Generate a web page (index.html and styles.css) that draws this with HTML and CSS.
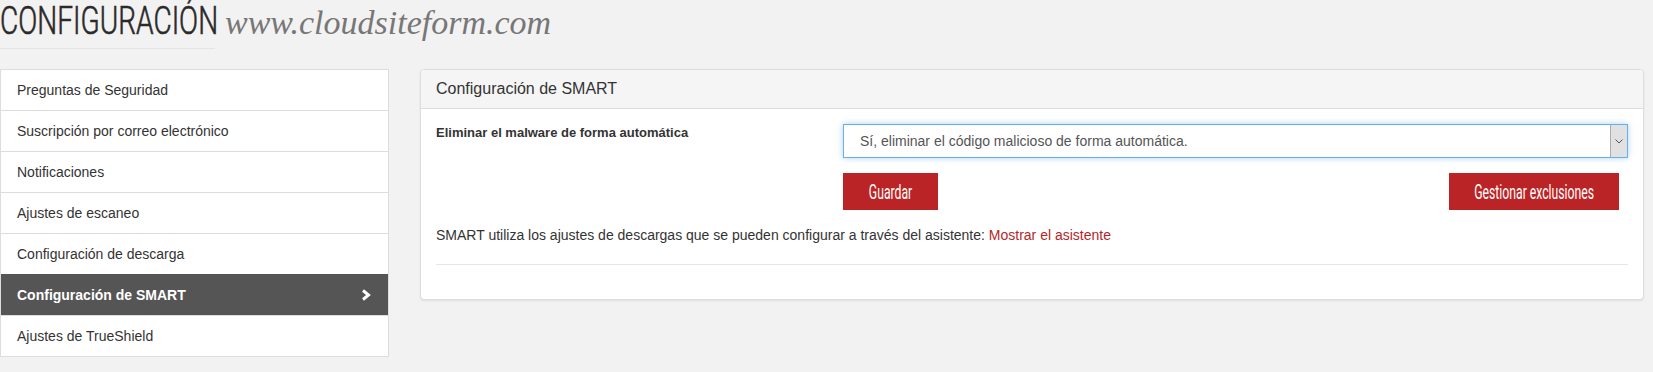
FILE: index.html
```html
<!DOCTYPE html>
<html lang="es">
<head>
<meta charset="utf-8">
<title>Configuración</title>
<link rel="stylesheet" href="styles.css">
</head>
<body>
<div class="page">
  <header class="top">
    <div class="brand">
      <h1 class="title"><span class="title-text">CONFIGURACIÓN</span></h1>
    </div>
    <span class="site">www.cloudsiteform.com</span>
  </header>

  <div class="layout">
    <nav class="side">
      <a class="side-item">Preguntas de Seguridad</a>
      <a class="side-item">Suscripción por correo electrónico</a>
      <a class="side-item">Notificaciones</a>
      <a class="side-item">Ajustes de escaneo</a>
      <a class="side-item">Configuración de descarga</a>
      <a class="side-item active">Configuración de SMART
        <svg class="chev" width="10" height="12" viewBox="0 0 10 12"><polyline points="2,1.5 7.5,6 2,10.5" fill="none" stroke="#fff" stroke-width="3"/></svg>
      </a>
      <a class="side-item">Ajustes de TrueShield</a>
    </nav>

    <section class="panel">
      <div class="panel-head">Configuración de SMART</div>
      <div class="panel-body">
        <div class="form-row">
          <label class="ctl-label">Eliminar el malware de forma automática</label>
          <div class="ctl">
            <div class="select-box">
              <select class="select"><option>Sí, eliminar el código malicioso de forma automática.</option></select>
              <span class="select-arrow"><svg width="8" height="5" viewBox="0 0 8 5"><polyline points="0.5,0.5 4,4 7.5,0.5" fill="none" stroke="#555" stroke-width="1"/></svg></span>
            </div>
            <div class="btn-row">
              <button class="btn btn-save"><span class="btn-text">Guardar</span></button>
              <button class="btn btn-wide"><span class="btn-text">Gestionar exclusiones</span></button>
            </div>
          </div>
        </div>
        <p class="note">SMART utiliza los ajustes de descargas que se pueden configurar a través del asistente: <a class="link">Mostrar el asistente</a></p>
        <hr class="sep">
      </div>
    </section>
  </div>
</div>
</body>
</html>
```

FILE: styles.css
```css
* { box-sizing: border-box; }
html, body { margin: 0; padding: 0; }
body {
  background: #f2f2f2;
  font-family: "Liberation Sans", Arial, sans-serif;
  color: #333;
}
.page { padding: 0 9px 0 0; }

.top {
  display: flex;
  align-items: baseline;
  gap: 10px;
}
.brand {
  width: 215px;
  padding-bottom: 6px;
  border-bottom: 1px solid #e4e4e4;
  white-space: nowrap;
}
.title {
  margin: 0;
  font-family: Roboto, "Liberation Sans", sans-serif;
  font-weight: 300;
  font-size: 39px;
  line-height: 42px;
  color: #2a2a2a;
}
.title-text {
  display: inline-block;
  transform: scaleX(0.72);
  transform-origin: left center;
  -webkit-text-stroke: 0.6px #2a2a2a;
}
.site {
  font-family: "Liberation Serif", "Times New Roman", serif;
  font-style: italic;
  font-size: 34px;
  color: #777;
}

.layout {
  display: flex;
  align-items: flex-start;
  gap: 31px;
  margin-top: 20px;
}

.side {
  width: 389px;
  flex: none;
  background: #fff;
  border: 1px solid #ddd;
  display: flex;
  flex-direction: column;
}
.side-item {
  display: flex;
  align-items: center;
  justify-content: space-between;
  height: 41px;
  padding: 0 16px;
  font-size: 14px;
  color: #333;
  border-top: 1px solid #ddd;
}
.side-item:first-child { border-top: none; height: 40px; }
.side-item.active {
  background: #555;
  color: #fff;
  font-weight: bold;
  border-top-color: #555;
  padding-right: 17px;
}
.chev { display: block; }

.panel {
  flex: 1;
  background: #fff;
  border: 1px solid #ddd;
  border-radius: 4px;
  box-shadow: 0 1px 2px rgba(0,0,0,0.08);
}
.panel-head {
  background: #f5f5f5;
  border-bottom: 1px solid #ddd;
  border-radius: 3px 3px 0 0;
  padding: 10px 15px;
  font-size: 16px;
  line-height: 18px;
  color: #333;
}
.panel-body { padding: 15px 15px 14px; }

.form-row {
  display: grid;
  grid-template-columns: 407px 1fr;
}
.ctl-label {
  font-weight: bold;
  font-size: 13px;
  line-height: 18px;
  color: #333;
}
.select-box {
  display: flex;
  height: 34px;
  border: 1px solid #66afe9;
  box-shadow: 0 0 6px rgba(102,175,233,0.55);
  background: #fff;
}
.select {
  flex: 1;
  -webkit-appearance: none;
  appearance: none;
  border: none;
  outline: none;
  background: #fff;
  padding: 0 16px;
  font-family: "Liberation Sans", Arial, sans-serif;
  font-size: 14px;
  color: #555;
}
.select-arrow {
  width: 17px;
  flex: none;
  display: flex;
  align-items: center;
  justify-content: center;
  background: #e1e1e1;
  border-left: 1px solid #acacac;
}

.btn-row {
  display: flex;
  justify-content: space-between;
  margin-top: 15px;
  padding-right: 9px;
}
.btn {
  height: 37px;
  border: none;
  background: #bb2426;
  color: #fff;
  font-family: Roboto, "Liberation Sans", sans-serif;
  font-size: 20px;
  padding: 0;
  display: flex;
  align-items: center;
  justify-content: center;
  white-space: nowrap;
}
.btn-save { width: 95px; }
.btn-wide { width: 170px; }
.btn-text {
  display: inline-block;
  transform: scaleX(0.61);
  transform-origin: center;
}

.note {
  margin: 15px 0 0;
  font-size: 14px;
  line-height: 20px;
  color: #333;
}
.link { color: #b5262a; }
.sep {
  margin: 19px 0 20px;
  border: none;
  border-top: 1px solid #e6e6e6;
}
```
